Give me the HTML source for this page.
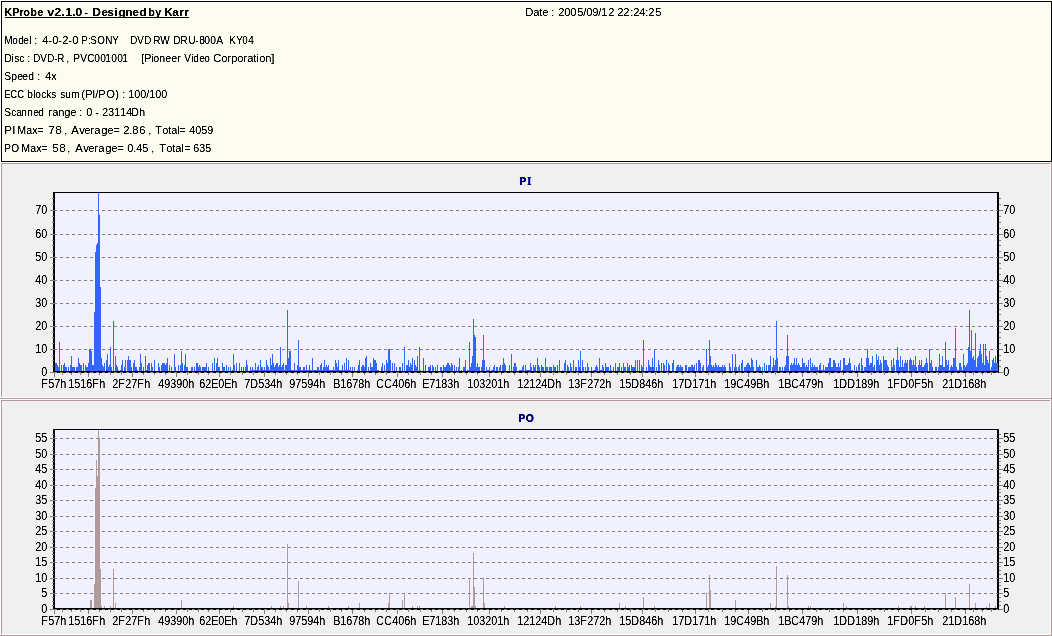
<!DOCTYPE html>
<html><head><meta charset="utf-8"><title>KProbe v2.1.0 - Designed by Karr</title>
<style>
html,body{margin:0;padding:0;background:#fff;}
svg{display:block;}
text{font-family:"Liberation Sans","DejaVu Sans",sans-serif;fill:#000;}
.i{font-size:11px;}
.t{font-size:11px;font-weight:bold;}
.a{font-size:12.5px;}
.h{font-family:"DejaVu Sans","Liberation Sans",sans-serif;font-size:11px;font-weight:bold;fill:#000080;}
.hs{font-family:"DejaVu Serif","Liberation Serif",serif;}
</style></head><body>
<svg width="1052" height="636" viewBox="0 0 1052 636" shape-rendering="crispEdges">
<defs><filter id="cr" x="0" y="0" width="1052" height="636" filterUnits="userSpaceOnUse" color-interpolation-filters="sRGB"><feComponentTransfer><feFuncA type="table" tableValues="0 0.1 0.75 1 1"/></feComponentTransfer></filter></defs>
<rect x="0" y="0" width="1052" height="636" fill="#ffffff"/>
<rect x="1.5" y="1.5" width="1050" height="160" fill="#fcfcf1" stroke="#000" stroke-width="1"/>
<rect x="5" y="17" width="184" height="1" fill="#000"/>
<rect x="1" y="163" width="1051" height="236" fill="#f0f0f0"/>
<rect x="1" y="163" width="1049" height="1" fill="#b09a9a"/>
<rect x="1" y="163" width="1" height="234" fill="#b09a9a"/>
<rect x="2" y="397" width="1049" height="1" fill="#fff"/>
<rect x="1050" y="163" width="1" height="235" fill="#fff"/>
<rect x="0" y="398" width="1052" height="1" fill="#b09a9a"/>
<rect x="1051" y="162" width="1" height="237" fill="#b09a9a"/>
<rect x="55" y="193" width="942" height="178" fill="#f0f0ff"/>
<path d="M54 349.5H997 M54 326.5H997 M54 303.5H997 M54 280.5H997 M54 257.5H997 M54 234.5H997 M54 210.5H997" stroke="#808080" stroke-width="1" stroke-dasharray="3 3" fill="none"/>
<path d="M55 363h2v8h-2zM57 365h1v6h-1zM58 367h1v4h-1zM59 342h1v29h-1zM61 365h1v6h-1zM63 365h1v6h-1zM64 363h1v8h-1zM65 367h2v4h-2zM68 367h1v4h-1zM70 365h1v6h-1zM71 356h1v15h-1zM72 367h3v4h-3zM76 367h2v4h-2zM78 358h1v13h-1zM79 363h1v8h-1zM80 365h2v6h-2zM83 363h1v8h-1zM85 365h1v6h-1zM86 367h2v4h-2zM88 363h1v8h-1zM89 349h2v22h-2zM91 351h1v20h-1zM92 365h2v6h-2zM94 312h1v59h-1zM95 252h1v119h-1zM96 245h1v126h-1zM97 243h1v128h-1zM98 193h1v178h-1zM99 215h1v156h-1zM100 287h1v84h-1zM101 358h1v13h-1zM102 365h1v6h-1zM103 367h1v4h-1zM104 363h1v8h-1zM106 360h1v11h-1zM107 354h1v17h-1zM108 367h1v4h-1zM109 365h1v6h-1zM110 347h1v24h-1zM111 367h1v4h-1zM113 321h1v50h-1zM115 356h1v15h-1zM116 365h1v6h-1zM117 367h1v4h-1zM118 370h1v1h-1zM120 370h1v1h-1zM121 365h1v6h-1zM122 360h1v11h-1zM124 367h1v4h-1zM125 360h1v11h-1zM127 360h1v11h-1zM128 356h1v15h-1zM129 360h2v11h-2zM131 367h1v4h-1zM133 363h1v8h-1zM134 360h1v11h-1zM135 367h2v4h-2zM137 370h1v1h-1zM139 367h1v4h-1zM140 354h1v17h-1zM141 363h1v8h-1zM143 367h1v4h-1zM145 356h1v15h-1zM146 370h1v1h-1zM147 365h1v6h-1zM148 363h2v8h-2zM151 363h1v8h-1zM152 367h1v4h-1zM154 360h1v11h-1zM158 363h1v8h-1zM159 367h1v4h-1zM161 365h1v6h-1zM162 363h3v8h-3zM165 365h1v6h-1zM166 363h1v8h-1zM167 358h1v13h-1zM169 365h1v6h-1zM171 367h1v4h-1zM174 354h1v17h-1zM175 367h1v4h-1zM178 365h1v6h-1zM180 365h1v6h-1zM181 351h1v20h-1zM182 363h1v8h-1zM184 365h1v6h-1zM185 354h1v17h-1zM186 367h2v4h-2zM191 367h2v4h-2zM194 367h1v4h-1zM196 363h2v8h-2zM198 367h1v4h-1zM199 365h1v6h-1zM200 367h1v4h-1zM202 367h4v4h-4zM206 363h1v8h-1zM208 367h1v4h-1zM212 363h1v8h-1zM214 358h1v13h-1zM216 363h1v8h-1zM217 358h1v13h-1zM218 367h2v4h-2zM222 363h1v8h-1zM223 367h2v4h-2zM226 365h1v6h-1zM228 367h1v4h-1zM230 367h1v4h-1zM232 370h1v1h-1zM233 354h1v17h-1zM234 365h1v6h-1zM236 363h1v8h-1zM239 363h1v8h-1zM241 367h1v4h-1zM243 367h1v4h-1zM245 367h1v4h-1zM246 360h1v11h-1zM247 365h1v6h-1zM250 367h1v4h-1zM251 370h1v1h-1zM252 367h1v4h-1zM253 370h2v1h-2zM255 363h1v8h-1zM256 370h1v1h-1zM257 367h1v4h-1zM258 365h1v6h-1zM259 370h1v1h-1zM260 360h1v11h-1zM261 367h2v4h-2zM263 370h1v1h-1zM264 367h1v4h-1zM265 370h1v1h-1zM266 360h1v11h-1zM267 365h1v6h-1zM268 367h1v4h-1zM269 370h1v1h-1zM270 358h1v13h-1zM271 365h1v6h-1zM272 354h1v17h-1zM273 363h1v8h-1zM274 367h1v4h-1zM275 365h1v6h-1zM276 363h2v8h-2zM278 367h1v4h-1zM279 365h1v6h-1zM280 347h1v24h-1zM281 367h1v4h-1zM282 365h1v6h-1zM283 363h1v8h-1zM284 370h1v1h-1zM285 365h2v6h-2zM287 310h1v61h-1zM288 358h1v13h-1zM289 351h2v20h-2zM291 370h3v1h-3zM294 363h1v8h-1zM295 370h2v1h-2zM297 365h1v6h-1zM298 340h1v31h-1zM299 367h2v4h-2zM301 370h2v1h-2zM303 367h2v4h-2zM305 370h1v1h-1zM306 365h1v6h-1zM307 370h2v1h-2zM309 365h1v6h-1zM310 370h2v1h-2zM312 358h1v13h-1zM313 370h4v1h-4zM317 367h2v4h-2zM319 370h1v1h-1zM320 365h1v6h-1zM321 363h1v8h-1zM322 370h1v1h-1zM323 367h1v4h-1zM324 360h1v11h-1zM325 367h1v4h-1zM326 365h1v6h-1zM327 367h1v4h-1zM328 365h1v6h-1zM329 370h4v1h-4zM333 367h1v4h-1zM334 370h1v1h-1zM335 360h1v11h-1zM336 363h1v8h-1zM337 367h1v4h-1zM338 360h1v11h-1zM339 370h3v1h-3zM342 365h1v6h-1zM343 370h1v1h-1zM344 363h1v8h-1zM345 370h1v1h-1zM346 358h1v13h-1zM347 370h1v1h-1zM348 360h1v11h-1zM349 370h1v1h-1zM350 367h1v4h-1zM352 367h1v4h-1zM354 367h1v4h-1zM357 370h1v1h-1zM358 365h1v6h-1zM359 360h1v11h-1zM361 367h1v4h-1zM362 365h2v6h-2zM364 367h1v4h-1zM365 358h1v13h-1zM366 356h1v15h-1zM368 367h1v4h-1zM370 363h1v8h-1zM371 367h2v4h-2zM373 358h1v13h-1zM374 360h2v11h-2zM376 363h1v8h-1zM377 370h2v1h-2zM381 367h1v4h-1zM382 363h1v8h-1zM384 365h1v6h-1zM386 360h1v11h-1zM387 363h1v8h-1zM388 349h2v22h-2zM390 360h1v11h-1zM392 363h1v8h-1zM394 363h1v8h-1zM396 367h1v4h-1zM399 367h2v4h-2zM402 363h1v8h-1zM404 347h1v24h-1zM406 365h2v6h-2zM408 360h1v11h-1zM409 367h1v4h-1zM410 363h1v8h-1zM411 365h1v6h-1zM412 358h1v13h-1zM414 360h1v11h-1zM415 365h1v6h-1zM416 367h1v4h-1zM417 356h1v15h-1zM419 347h1v24h-1zM420 370h1v1h-1zM423 358h1v13h-1zM425 365h1v6h-1zM428 367h2v4h-2zM430 365h1v6h-1zM432 365h1v6h-1zM433 367h1v4h-1zM435 367h1v4h-1zM437 365h1v6h-1zM440 367h2v4h-2zM443 365h1v6h-1zM444 367h2v4h-2zM446 365h1v6h-1zM447 363h2v8h-2zM449 365h1v6h-1zM450 367h1v4h-1zM451 363h1v8h-1zM452 365h1v6h-1zM454 365h1v6h-1zM456 367h1v4h-1zM458 367h1v4h-1zM459 358h1v13h-1zM461 370h1v1h-1zM463 367h2v4h-2zM465 360h1v11h-1zM467 370h2v1h-2zM469 342h1v29h-1zM470 367h1v4h-1zM471 363h1v8h-1zM472 356h1v15h-1zM473 319h1v52h-1zM474 335h1v36h-1zM475 337h1v34h-1zM476 367h1v4h-1zM477 363h1v8h-1zM478 367h2v4h-2zM481 367h1v4h-1zM482 360h1v11h-1zM483 335h1v36h-1zM484 360h1v11h-1zM486 367h1v4h-1zM487 370h2v1h-2zM489 367h1v4h-1zM491 370h2v1h-2zM493 367h1v4h-1zM494 365h1v6h-1zM496 367h2v4h-2zM499 367h1v4h-1zM500 365h1v6h-1zM502 365h1v6h-1zM503 358h1v13h-1zM504 363h1v8h-1zM505 365h1v6h-1zM509 365h1v6h-1zM511 354h1v17h-1zM513 367h1v4h-1zM514 363h2v8h-2zM516 367h1v4h-1zM519 370h3v1h-3zM522 367h1v4h-1zM523 365h1v6h-1zM525 365h1v6h-1zM526 370h4v1h-4zM530 363h1v8h-1zM531 367h1v4h-1zM533 365h1v6h-1zM534 367h1v4h-1zM535 365h1v6h-1zM537 358h1v13h-1zM538 365h1v6h-1zM539 367h1v4h-1zM541 365h1v6h-1zM542 367h2v4h-2zM545 358h1v13h-1zM546 367h2v4h-2zM549 367h3v4h-3zM553 365h1v6h-1zM554 367h2v4h-2zM557 365h1v6h-1zM559 360h1v11h-1zM562 370h1v1h-1zM564 363h1v8h-1zM565 360h1v11h-1zM567 365h1v6h-1zM568 367h1v4h-1zM570 363h1v8h-1zM571 367h1v4h-1zM573 360h1v11h-1zM575 367h2v4h-2zM578 360h1v11h-1zM579 367h1v4h-1zM580 351h1v20h-1zM582 360h1v11h-1zM583 367h1v4h-1zM585 367h1v4h-1zM587 363h1v8h-1zM588 367h1v4h-1zM591 367h1v4h-1zM593 370h2v1h-2zM595 367h1v4h-1zM596 365h1v6h-1zM597 367h1v4h-1zM599 358h1v13h-1zM600 370h2v1h-2zM602 365h1v6h-1zM603 367h1v4h-1zM605 363h1v8h-1zM606 367h3v4h-3zM610 365h1v6h-1zM611 370h1v1h-1zM613 367h1v4h-1zM615 363h1v8h-1zM617 367h2v4h-2zM619 363h1v8h-1zM621 367h1v4h-1zM623 363h1v8h-1zM624 367h2v4h-2zM627 363h1v8h-1zM628 367h1v4h-1zM629 365h1v6h-1zM631 365h1v6h-1zM632 367h3v4h-3zM635 360h1v11h-1zM637 360h1v11h-1zM639 360h1v11h-1zM641 365h1v6h-1zM642 367h1v4h-1zM643 340h1v31h-1zM646 367h1v4h-1zM648 360h1v11h-1zM649 365h1v6h-1zM650 367h2v4h-2zM652 358h1v13h-1zM653 367h1v4h-1zM654 349h1v22h-1zM656 367h1v4h-1zM658 360h1v11h-1zM659 365h1v6h-1zM661 363h1v8h-1zM663 363h1v8h-1zM664 365h1v6h-1zM666 360h1v11h-1zM668 363h1v8h-1zM669 365h1v6h-1zM672 363h1v8h-1zM673 360h1v11h-1zM676 367h1v4h-1zM677 365h2v6h-2zM679 367h1v4h-1zM680 365h1v6h-1zM681 367h2v4h-2zM685 365h2v6h-2zM688 367h3v4h-3zM691 365h2v6h-2zM693 367h1v4h-1zM694 365h1v6h-1zM696 363h1v8h-1zM698 360h2v11h-2zM700 363h1v8h-1zM702 367h1v4h-1zM703 365h1v6h-1zM706 349h1v22h-1zM707 367h1v4h-1zM708 365h1v6h-1zM709 340h1v31h-1zM710 356h1v15h-1zM711 365h1v6h-1zM712 367h1v4h-1zM713 365h1v6h-1zM714 367h1v4h-1zM715 363h1v8h-1zM716 365h1v6h-1zM717 367h1v4h-1zM718 365h1v6h-1zM719 367h3v4h-3zM722 365h1v6h-1zM723 367h1v4h-1zM724 365h1v6h-1zM725 367h1v4h-1zM729 363h1v8h-1zM730 367h1v4h-1zM732 354h1v17h-1zM734 367h1v4h-1zM735 354h1v17h-1zM736 367h1v4h-1zM738 367h1v4h-1zM739 365h1v6h-1zM741 363h1v8h-1zM742 360h1v11h-1zM744 367h2v4h-2zM746 365h1v6h-1zM747 363h2v8h-2zM749 365h1v6h-1zM750 367h1v4h-1zM751 358h1v13h-1zM752 360h1v11h-1zM753 367h1v4h-1zM756 360h1v11h-1zM757 367h2v4h-2zM759 365h1v6h-1zM760 367h1v4h-1zM762 367h1v4h-1zM764 363h1v8h-1zM766 365h1v6h-1zM768 365h2v6h-2zM770 356h1v15h-1zM772 367h1v4h-1zM773 358h1v13h-1zM774 365h1v6h-1zM775 360h1v11h-1zM776 321h1v50h-1zM777 358h1v13h-1zM779 367h2v4h-2zM782 367h1v4h-1zM784 367h1v4h-1zM785 365h1v6h-1zM786 356h1v15h-1zM787 335h1v36h-1zM788 356h1v15h-1zM790 365h1v6h-1zM791 363h1v8h-1zM792 365h1v6h-1zM793 363h1v8h-1zM794 358h1v13h-1zM795 365h1v6h-1zM796 358h1v13h-1zM797 365h1v6h-1zM798 363h1v8h-1zM799 365h1v6h-1zM800 367h2v4h-2zM802 358h1v13h-1zM803 363h2v8h-2zM805 367h1v4h-1zM806 365h1v6h-1zM807 367h1v4h-1zM808 360h1v11h-1zM810 358h1v13h-1zM811 367h1v4h-1zM812 363h1v8h-1zM813 367h1v4h-1zM814 365h1v6h-1zM815 367h3v4h-3zM818 370h1v1h-1zM819 365h1v6h-1zM820 363h1v8h-1zM821 370h2v1h-2zM823 365h1v6h-1zM824 370h1v1h-1zM825 367h3v4h-3zM828 363h1v8h-1zM829 358h2v13h-2zM831 367h2v4h-2zM833 360h2v11h-2zM835 363h1v8h-1zM836 367h2v4h-2zM838 363h1v8h-1zM839 367h1v4h-1zM840 360h1v11h-1zM842 370h1v1h-1zM843 358h2v13h-2zM845 365h3v6h-3zM848 363h1v8h-1zM849 358h1v13h-1zM850 363h1v8h-1zM851 370h2v1h-2zM854 365h1v6h-1zM856 367h1v4h-1zM858 365h1v6h-1zM859 363h1v8h-1zM861 358h1v13h-1zM862 365h1v6h-1zM864 367h2v4h-2zM866 358h1v13h-1zM867 349h1v22h-1zM868 358h1v13h-1zM869 365h1v6h-1zM870 363h2v8h-2zM872 356h1v15h-1zM873 367h1v4h-1zM874 365h1v6h-1zM876 354h1v17h-1zM877 360h1v11h-1zM878 356h1v15h-1zM879 365h1v6h-1zM880 360h1v11h-1zM881 363h1v8h-1zM883 356h1v15h-1zM884 360h3v11h-3zM887 365h1v6h-1zM888 367h1v4h-1zM891 360h1v11h-1zM892 367h1v4h-1zM893 358h1v13h-1zM894 365h1v6h-1zM896 360h1v11h-1zM897 347h1v24h-1zM898 360h1v11h-1zM899 367h1v4h-1zM900 356h1v15h-1zM901 367h1v4h-1zM902 360h1v11h-1zM903 367h1v4h-1zM904 363h1v8h-1zM905 360h1v11h-1zM906 363h1v8h-1zM907 360h1v11h-1zM909 360h1v11h-1zM910 358h1v13h-1zM911 360h1v11h-1zM912 365h1v6h-1zM913 360h1v11h-1zM914 365h1v6h-1zM915 356h1v15h-1zM916 367h1v4h-1zM918 365h1v6h-1zM919 360h1v11h-1zM920 365h1v6h-1zM921 360h1v11h-1zM922 367h2v4h-2zM924 365h1v6h-1zM925 363h1v8h-1zM926 358h1v13h-1zM927 363h1v8h-1zM929 349h1v22h-1zM930 363h1v8h-1zM931 360h1v11h-1zM932 367h1v4h-1zM935 367h2v4h-2zM938 367h1v4h-1zM939 354h1v17h-1zM940 365h2v6h-2zM942 356h1v15h-1zM943 367h2v4h-2zM945 342h1v29h-1zM946 360h1v11h-1zM947 365h1v6h-1zM948 360h1v11h-1zM949 370h1v1h-1zM950 367h1v4h-1zM951 365h1v6h-1zM952 367h1v4h-1zM953 358h2v13h-2zM955 328h1v43h-1zM956 367h1v4h-1zM957 370h2v1h-2zM959 363h2v8h-2zM961 367h1v4h-1zM962 370h1v1h-1zM963 354h1v17h-1zM964 365h1v6h-1zM965 367h1v4h-1zM966 365h1v6h-1zM967 363h1v8h-1zM968 347h1v24h-1zM969 310h1v61h-1zM970 351h1v20h-1zM971 330h1v41h-1zM972 358h1v13h-1zM973 356h1v15h-1zM974 360h1v11h-1zM975 333h1v38h-1zM976 367h1v4h-1zM977 358h1v13h-1zM978 356h1v15h-1zM979 351h1v20h-1zM980 344h1v27h-1zM981 354h1v17h-1zM982 363h1v8h-1zM983 344h1v27h-1zM984 365h1v6h-1zM985 344h1v27h-1zM986 356h1v15h-1zM987 360h1v11h-1zM988 363h1v8h-1zM989 351h1v20h-1zM990 370h1v1h-1zM991 367h1v4h-1zM992 360h1v11h-1zM993 358h1v13h-1zM994 363h1v8h-1zM995 356h1v15h-1zM996 363h1v8h-1z" fill="#3366ff"/>
<rect x="53" y="192" width="946" height="1" fill="#000"/>
<rect x="53" y="192" width="2" height="181" fill="#000"/>
<rect x="997" y="192" width="2" height="181" fill="#000"/>
<rect x="53" y="371" width="946" height="2" fill="#000"/>
<rect x="997" y="363" width="1" height="8" fill="#3366ff"/>
<path d="M54 372.5H997" stroke="#808080" stroke-width="1" stroke-dasharray="3 3" fill="none"/>
<path d="M50 372.5h5M997 372.5h1M999 372.5h4M50 349.5h5M997 349.5h1M999 349.5h4M50 326.5h5M997 326.5h1M999 326.5h4M50 303.5h5M997 303.5h1M999 303.5h4M50 280.5h5M997 280.5h1M999 280.5h4M50 257.5h5M997 257.5h1M999 257.5h4M50 234.5h5M997 234.5h1M999 234.5h4M50 210.5h5M997 210.5h1M999 210.5h4M52 366.5h2M999 366.5h2M52 360.5h2M999 360.5h2M52 355.5h2M999 355.5h2M52 343.5h2M999 343.5h2M52 337.5h2M999 337.5h2M52 332.5h2M999 332.5h2M52 320.5h2M999 320.5h2M52 314.5h2M999 314.5h2M52 309.5h2M999 309.5h2M52 297.5h2M999 297.5h2M52 291.5h2M999 291.5h2M52 286.5h2M999 286.5h2M52 274.5h2M999 274.5h2M52 268.5h2M999 268.5h2M52 263.5h2M999 263.5h2M52 251.5h2M999 251.5h2M52 245.5h2M999 245.5h2M52 240.5h2M999 240.5h2M52 228.5h2M999 228.5h2M52 222.5h2M999 222.5h2M52 216.5h2M999 216.5h2M52 204.5h2M999 204.5h2M52 198.5h2M999 198.5h2M54.5 373v4M88.5 373v4M132.5 373v4M176.5 373v4M219.5 373v4M264.5 373v4M308.5 373v4M352.5 373v4M397.5 373v4M442.5 373v4M489.5 373v4M540.5 373v4M591.5 373v4M642.5 373v4M695.5 373v4M748.5 373v4M802.5 373v4M857.5 373v4M911.5 373v4M965.5 373v4M62.5 373v2M71.5 373v2M80.5 373v2M99.5 373v2M110.5 373v2M121.5 373v2M143.5 373v2M154.5 373v2M165.5 373v2M187.5 373v2M198.5 373v2M208.5 373v2M230.5 373v2M242.5 373v2M253.5 373v2M275.5 373v2M286.5 373v2M297.5 373v2M319.5 373v2M330.5 373v2M341.5 373v2M364.5 373v2M375.5 373v2M386.5 373v2M408.5 373v2M420.5 373v2M431.5 373v2M454.5 373v2M466.5 373v2M477.5 373v2M501.5 373v2M514.5 373v2M527.5 373v2M553.5 373v2M566.5 373v2M578.5 373v2M604.5 373v2M617.5 373v2M630.5 373v2M655.5 373v2M668.5 373v2M682.5 373v2M708.5 373v2M722.5 373v2M735.5 373v2M762.5 373v2M775.5 373v2M789.5 373v2M816.5 373v2M829.5 373v2M843.5 373v2M871.5 373v2M884.5 373v2M898.5 373v2M925.5 373v2M938.5 373v2M951.5 373v2M973.5 373v2M982.5 373v2M991.5 373v2" stroke="#808080" stroke-width="1" fill="none"/>
<rect x="1" y="400" width="1051" height="236" fill="#f0f0f0"/>
<rect x="1" y="400" width="1049" height="1" fill="#b09a9a"/>
<rect x="1" y="400" width="1" height="234" fill="#b09a9a"/>
<rect x="2" y="634" width="1049" height="1" fill="#fff"/>
<rect x="1050" y="400" width="1" height="235" fill="#fff"/>
<rect x="0" y="635" width="1052" height="1" fill="#b09a9a"/>
<rect x="1051" y="399" width="1" height="237" fill="#b09a9a"/>
<rect x="55" y="430" width="942" height="178" fill="#f0f0ff"/>
<path d="M54 593.5H997 M54 578.5H997 M54 562.5H997 M54 547.5H997 M54 531.5H997 M54 516.5H997 M54 500.5H997 M54 485.5H997 M54 469.5H997 M54 454.5H997 M54 438.5H997" stroke="#808080" stroke-width="1" stroke-dasharray="3 3" fill="none"/>
<path d="M90 600h2v8h-2zM94 584h1v24h-1zM95 488h1v120h-1zM96 460h1v148h-1zM97 476h1v132h-1zM98 430h1v178h-1zM99 438h1v170h-1zM100 569h1v39h-1zM101 606h1v2h-1zM104 606h1v2h-1zM110 606h1v2h-1zM113 569h1v39h-1zM115 603h1v5h-1zM181 600h1v8h-1zM233 606h1v2h-1zM271 606h1v2h-1zM280 606h1v2h-1zM283 606h1v2h-1zM287 544h1v64h-1zM288 603h1v5h-1zM298 581h1v27h-1zM306 606h1v2h-1zM328 606h1v2h-1zM348 606h1v2h-1zM359 603h1v5h-1zM388 603h1v5h-1zM389 593h1v15h-1zM402 600h1v8h-1zM404 593h1v15h-1zM412 606h1v2h-1zM417 606h1v2h-1zM419 606h1v2h-1zM469 578h1v30h-1zM471 606h2v2h-2zM473 553h1v55h-1zM474 587h1v21h-1zM475 606h1v2h-1zM483 578h1v30h-1zM484 603h1v5h-1zM504 606h1v2h-1zM555 606h1v2h-1zM580 606h1v2h-1zM619 603h1v5h-1zM625 606h1v2h-1zM643 597h1v11h-1zM654 606h1v2h-1zM706 593h1v15h-1zM709 575h1v33h-1zM710 590h1v18h-1zM735 600h1v8h-1zM770 603h1v5h-1zM775 606h1v2h-1zM776 566h1v42h-1zM787 575h1v33h-1zM788 606h1v2h-1zM808 606h1v2h-1zM810 606h1v2h-1zM843 603h1v5h-1zM846 606h1v2h-1zM898 606h1v2h-1zM910 606h2v2h-2zM915 606h1v2h-1zM924 606h1v2h-1zM945 593h1v15h-1zM955 597h1v11h-1zM969 584h1v24h-1zM975 603h1v5h-1zM986 606h1v2h-1zM989 603h1v5h-1zM995 606h1v2h-1z" fill="#b09a9a"/>
<rect x="53" y="429" width="946" height="1" fill="#000"/>
<rect x="53" y="429" width="2" height="181" fill="#000"/>
<rect x="997" y="429" width="2" height="181" fill="#000"/>
<rect x="53" y="608" width="946" height="2" fill="#000"/>
<path d="M54 609.5H997" stroke="#808080" stroke-width="1" stroke-dasharray="3 3" fill="none"/>
<path d="M50 609.5h5M997 609.5h1M999 609.5h4M50 593.5h5M997 593.5h1M999 593.5h4M50 578.5h5M997 578.5h1M999 578.5h4M50 562.5h5M997 562.5h1M999 562.5h4M50 547.5h5M997 547.5h1M999 547.5h4M50 531.5h5M997 531.5h1M999 531.5h4M50 516.5h5M997 516.5h1M999 516.5h4M50 500.5h5M997 500.5h1M999 500.5h4M50 485.5h5M997 485.5h1M999 485.5h4M50 469.5h5M997 469.5h1M999 469.5h4M50 454.5h5M997 454.5h1M999 454.5h4M50 438.5h5M997 438.5h1M999 438.5h4M52 605.5h2M999 605.5h2M52 601.5h2M999 601.5h2M52 597.5h2M999 597.5h2M52 589.5h2M999 589.5h2M52 585.5h2M999 585.5h2M52 582.5h2M999 582.5h2M52 574.5h2M999 574.5h2M52 570.5h2M999 570.5h2M52 566.5h2M999 566.5h2M52 558.5h2M999 558.5h2M52 554.5h2M999 554.5h2M52 551.5h2M999 551.5h2M52 543.5h2M999 543.5h2M52 539.5h2M999 539.5h2M52 535.5h2M999 535.5h2M52 527.5h2M999 527.5h2M52 523.5h2M999 523.5h2M52 520.5h2M999 520.5h2M52 512.5h2M999 512.5h2M52 508.5h2M999 508.5h2M52 504.5h2M999 504.5h2M52 496.5h2M999 496.5h2M52 492.5h2M999 492.5h2M52 489.5h2M999 489.5h2M52 481.5h2M999 481.5h2M52 477.5h2M999 477.5h2M52 473.5h2M999 473.5h2M52 465.5h2M999 465.5h2M52 461.5h2M999 461.5h2M52 458.5h2M999 458.5h2M52 450.5h2M999 450.5h2M52 446.5h2M999 446.5h2M52 442.5h2M999 442.5h2M52 434.5h2M999 434.5h2M54.5 610v4M88.5 610v4M132.5 610v4M176.5 610v4M219.5 610v4M264.5 610v4M308.5 610v4M352.5 610v4M397.5 610v4M442.5 610v4M489.5 610v4M540.5 610v4M591.5 610v4M642.5 610v4M695.5 610v4M748.5 610v4M802.5 610v4M857.5 610v4M911.5 610v4M965.5 610v4M62.5 610v2M71.5 610v2M80.5 610v2M99.5 610v2M110.5 610v2M121.5 610v2M143.5 610v2M154.5 610v2M165.5 610v2M187.5 610v2M198.5 610v2M208.5 610v2M230.5 610v2M242.5 610v2M253.5 610v2M275.5 610v2M286.5 610v2M297.5 610v2M319.5 610v2M330.5 610v2M341.5 610v2M364.5 610v2M375.5 610v2M386.5 610v2M408.5 610v2M420.5 610v2M431.5 610v2M454.5 610v2M466.5 610v2M477.5 610v2M501.5 610v2M514.5 610v2M527.5 610v2M553.5 610v2M566.5 610v2M578.5 610v2M604.5 610v2M617.5 610v2M630.5 610v2M655.5 610v2M668.5 610v2M682.5 610v2M708.5 610v2M722.5 610v2M735.5 610v2M762.5 610v2M775.5 610v2M789.5 610v2M816.5 610v2M829.5 610v2M843.5 610v2M871.5 610v2M884.5 610v2M898.5 610v2M925.5 610v2M938.5 610v2M951.5 610v2M973.5 610v2M982.5 610v2M991.5 610v2" stroke="#808080" stroke-width="1" fill="none"/>
<g filter="url(#cr)">
<text class="t" transform="translate(0,16) scale(0.9946,1)" x="4.27 12.32 19.35 23.38 30.41 37.45">KProbe</text>
<text class="t" transform="translate(0,16) scale(1.1466,1)" x="41.21 47.31 53.42 56.91 63.01 65.63">v2.1.0</text>
<text class="t" transform="translate(0,16) scale(1.0000,1)" x="84.25">-</text>
<text class="t" transform="translate(0,16) scale(1.0989,1)" x="83.95 92.14 97.60 103.97 107.61 113.98 120.35 126.72">Designed</text>
<text class="t" transform="translate(0,16) scale(0.9873,1)" x="150.15 157.24">by</text>
<text class="t" transform="translate(0,16) scale(1.0681,1)" x="153.78 161.27 167.82 172.50">Karr</text>
<text class="i" transform="translate(0,44) scale(0.9110,1)" x="4.67 13.45 20.03 25.52 32.11">Model</text>
<text class="i" transform="translate(0,44) scale(1.0000,1)" x="34.25">:</text>
<text class="i" transform="translate(0,44) scale(1.0121,1)" x="41.74 47.67 51.62 57.55 61.50 67.43 71.38">4-0-2-0</text>
<text class="i" transform="translate(0,44) scale(0.8955,1)" x="90.73 98.54 100.78 108.59 117.53 125.34">P:SONY</text>
<text class="i" transform="translate(0,44) scale(0.8901,1)" x="146.34 154.20 162.06">DVD</text>
<text class="i" transform="translate(0,44) scale(0.9088,1)" x="168.64 176.34">RW</text>
<text class="i" transform="translate(0,44) scale(0.9338,1)" x="185.54 193.03 201.60 209.10 213.38 218.73 225.16 231.59">DRU-800A</text>
<text class="i" transform="translate(0,44) scale(0.8994,1)" x="254.90 262.68 269.35 276.03">KY04</text>
<text class="i" transform="translate(0,62) scale(0.9408,1)" x="4.52 11.96 15.15 20.46">Disc</text>
<text class="i" transform="translate(0,62) scale(1.0000,1)" x="27.25">:</text>
<text class="i" transform="translate(0,62) scale(0.8947,1)" x="37.16 44.99 52.81 60.63 63.99">DVD-R</text>
<text class="i" transform="translate(0,62) scale(1.0000,1)" x="66.25">,</text>
<text class="i" transform="translate(0,62) scale(0.9243,1)" x="79.25 86.83 94.40 101.97 108.47 113.88 120.37 126.86 132.27">PVC001001</text>
<text class="i" transform="translate(0,62) scale(0.9649,1)" x="146.39 149.50 156.75 158.82 165.04 171.26 177.48 183.70">[Pioneer</text>
<text class="i" transform="translate(0,62) scale(0.9159,1)" x="201.17 208.81 211.00 217.55 223.01">Video</text>
<text class="i" transform="translate(0,62) scale(1.0137,1)" x="210.37 218.26 224.18 228.13 234.04 239.96 243.91 249.83 252.79 255.75 261.67 267.59">Corporation]</text>
<text class="i" transform="translate(0,80) scale(0.9445,1)" x="4.50 11.91 18.26 23.56 29.91">Speed</text>
<text class="i" transform="translate(0,80) scale(1.0000,1)" x="37.25">:</text>
<text class="i" transform="translate(0,80) scale(0.9780,1)" x="46.27 52.40">4x</text>
<text class="i" transform="translate(0,98) scale(0.8583,1)" x="4.95 11.94 20.10">ECC</text>
<text class="i" transform="translate(0,98) scale(0.9244,1)" x="29.48 35.97 38.13 44.62 50.03 55.44">blocks</text>
<text class="i" transform="translate(0,98) scale(0.9215,1)" x="65.38 70.81 77.32">sum</text>
<text class="i" transform="translate(0,98) scale(1.0197,1)" x="79.68 83.60 90.47 93.41 96.35 104.20 113.02">(PI/PO)</text>
<text class="i" transform="translate(0,98) scale(1.0000,1)" x="122.25">:</text>
<text class="i" transform="translate(0,98) scale(0.9794,1)" x="130.95 137.08 143.21 149.33 152.40 158.52 164.65">100/100</text>
<text class="i" transform="translate(0,116) scale(0.9167,1)" x="4.64 12.27 17.73 23.18 29.73 36.27 41.73">Scanned</text>
<text class="i" transform="translate(0,116) scale(1.0106,1)" x="47.74 51.70 57.64 63.58 69.51">range</text>
<text class="i" transform="translate(0,116) scale(1.0000,1)" x="79.25">:</text>
<text class="i" transform="translate(0,116) scale(1.0000,1)" x="86.25">0</text>
<text class="i" transform="translate(0,116) scale(1.0000,1)" x="95.25">-</text>
<text class="i" transform="translate(0,116) scale(0.9612,1)" x="106.38 112.62 118.86 125.10 131.34 136.55 144.87">23114Dh</text>
<text class="i" transform="translate(0,134) scale(1.0619,1)" x="4.00 11.54">PI</text>
<text class="i" transform="translate(0,134) scale(0.9744,1)" x="17.70 26.94 33.10 38.23">Max=</text>
<text class="i" transform="translate(0,134) scale(1.0899,1)" x="44.27 50.69">78</text>
<text class="i" transform="translate(0,134) scale(1.0000,1)" x="64.25">,</text>
<text class="i" transform="translate(0,134) scale(1.0271,1)" x="69.37 77.16 82.03 87.87 91.76 98.58 104.42 110.26">Average=</text>
<text class="i" transform="translate(0,134) scale(1.0308,1)" x="119.57 125.39 128.30 135.09">2.86</text>
<text class="i" transform="translate(0,134) scale(1.0000,1)" x="148.25">,</text>
<text class="i" transform="translate(0,134) scale(0.9937,1)" x="156.23 163.27 169.31 172.33 178.37 180.38">Total=</text>
<text class="i" transform="translate(0,134) scale(0.9832,1)" x="192.48 198.58 204.68 210.78">4059</text>
<text class="i" transform="translate(0,152) scale(0.9126,1)" x="4.66 12.33">PO</text>
<text class="i" transform="translate(0,152) scale(0.9744,1)" x="21.81 31.05 37.20 42.33">Max=</text>
<text class="i" transform="translate(0,152) scale(1.0692,1)" x="48.87 55.42">58</text>
<text class="i" transform="translate(0,152) scale(1.0000,1)" x="67.25">,</text>
<text class="i" transform="translate(0,152) scale(1.0271,1)" x="73.26 81.05 85.92 91.76 95.66 102.47 108.31 114.16">Average=</text>
<text class="i" transform="translate(0,152) scale(0.9991,1)" x="127.36 133.36 136.37 142.37">0.45</text>
<text class="i" transform="translate(0,152) scale(1.0000,1)" x="151.25">,</text>
<text class="i" transform="translate(0,152) scale(1.0070,1)" x="158.14 165.09 171.05 174.03 179.99 182.97">Total=</text>
<text class="i" transform="translate(0,152) scale(0.9693,1)" x="199.38 205.57 211.76">635</text>
<text class="i" transform="translate(0,16) scale(1.0209,1)" x="514.52 522.35 528.23 531.17">Date</text>
<text class="i" transform="translate(0,16) scale(1.0000,1)" x="551.25">:</text>
<text class="i" transform="translate(0,16) scale(1.0140,1)" x="550.57 556.49 562.40 569.31 575.22 578.18 584.10 590.02 592.98 599.88">2005/09/12</text>
<text class="i" transform="translate(0,16) scale(1.0286,1)" x="600.07 605.90 612.71 615.63 621.46 627.29 630.21 637.01">22:24:25</text>
<text class="a" transform="translate(0,376) scale(0.8631,1)" x="47.79">0</text>
<text class="a" transform="translate(0,376) scale(0.8631,1)" x="1162.42">0</text>
<text class="a" transform="translate(0,353) scale(0.8631,1)" x="40.84 47.79">10</text>
<text class="a" transform="translate(0,353) scale(0.8631,1)" x="1162.42 1169.37">10</text>
<text class="a" transform="translate(0,330) scale(0.8631,1)" x="40.84 47.79">20</text>
<text class="a" transform="translate(0,330) scale(0.8631,1)" x="1162.42 1169.37">20</text>
<text class="a" transform="translate(0,307) scale(0.8631,1)" x="40.84 47.79">30</text>
<text class="a" transform="translate(0,307) scale(0.8631,1)" x="1162.42 1169.37">30</text>
<text class="a" transform="translate(0,284) scale(0.8631,1)" x="40.84 47.79">40</text>
<text class="a" transform="translate(0,284) scale(0.8631,1)" x="1162.42 1169.37">40</text>
<text class="a" transform="translate(0,261) scale(0.8631,1)" x="40.84 47.79">50</text>
<text class="a" transform="translate(0,261) scale(0.8631,1)" x="1162.42 1169.37">50</text>
<text class="a" transform="translate(0,238) scale(0.8631,1)" x="40.84 47.79">60</text>
<text class="a" transform="translate(0,238) scale(0.8631,1)" x="1162.42 1169.37">60</text>
<text class="a" transform="translate(0,214) scale(0.8631,1)" x="40.84 47.79">70</text>
<text class="a" transform="translate(0,214) scale(0.8631,1)" x="1162.42 1169.37">70</text>
<text class="a" transform="translate(0,388) scale(0.8631,1)" x="47.79 55.90 62.86 69.81">F57h</text>
<text class="a" transform="translate(0,388) scale(0.8631,1)" x="79.08 86.03 92.98 99.93 106.89 115.00">1516Fh</text>
<text class="a" transform="translate(0,388) scale(0.8631,1)" x="130.06 137.01 145.12 152.07 159.02 167.14">2F27Fh</text>
<text class="a" transform="translate(0,388) scale(0.8631,1)" x="183.36 190.31 197.26 204.21 211.16 218.12">49390h</text>
<text class="a" transform="translate(0,388) scale(0.8631,1)" x="230.86 237.81 244.76 252.88 259.83 267.94">62E0Eh</text>
<text class="a" transform="translate(0,388) scale(0.8631,1)" x="283.00 289.95 299.22 306.17 313.13 320.08">7D534h</text>
<text class="a" transform="translate(0,388) scale(0.8631,1)" x="335.14 342.09 349.04 356.00 362.95 369.90">97594h</text>
<text class="a" transform="translate(0,388) scale(0.8631,1)" x="386.12 394.23 401.18 408.13 415.09 422.04">B1678h</text>
<text class="a" transform="translate(0,388) scale(0.8631,1)" x="435.94 445.21 454.48 461.43 468.38 475.34">CC406h</text>
<text class="a" transform="translate(0,388) scale(0.8631,1)" x="489.24 497.35 504.30 511.25 518.21 525.16">E7183h</text>
<text class="a" transform="translate(0,388) scale(0.8631,1)" x="541.38 548.33 555.28 562.24 569.19 576.14 583.09">103201h</text>
<text class="a" transform="translate(0,388) scale(0.8631,1)" x="599.31 606.26 613.22 620.17 627.12 634.07 643.34">12124Dh</text>
<text class="a" transform="translate(0,388) scale(0.8631,1)" x="658.40 665.36 672.31 680.42 687.37 694.32 701.27">13F272h</text>
<text class="a" transform="translate(0,388) scale(0.8631,1)" x="717.49 724.45 731.40 740.67 747.62 754.57 761.52">15D846h</text>
<text class="a" transform="translate(0,388) scale(0.8631,1)" x="778.90 785.85 792.81 802.08 809.03 815.98 822.93">17D171h</text>
<text class="a" transform="translate(0,388) scale(0.8631,1)" x="839.15 846.10 853.06 862.33 869.28 876.23 884.34">19C49Bh</text>
<text class="a" transform="translate(0,388) scale(0.8631,1)" x="901.72 908.67 916.78 926.05 933.00 939.96 946.91">1BC479h</text>
<text class="a" transform="translate(0,388) scale(0.8631,1)" x="965.45 972.40 981.67 990.94 997.89 1004.84 1011.79">1DD189h</text>
<text class="a" transform="translate(0,388) scale(0.8631,1)" x="1028.01 1034.96 1043.08 1052.34 1059.30 1067.41 1074.36">1FD0F5h</text>
<text class="a" transform="translate(0,388) scale(0.8631,1)" x="1091.74 1098.69 1105.64 1114.91 1121.86 1128.82 1135.77">21D168h</text>
<text class="h" transform="translate(0,185) scale(0.92,1)" x="564.24 572.93">P<tspan class="hs">I</tspan></text>
<text class="a" transform="translate(0,613) scale(0.8631,1)" x="47.79">0</text>
<text class="a" transform="translate(0,613) scale(0.8631,1)" x="1162.42">0</text>
<text class="a" transform="translate(0,597) scale(0.8631,1)" x="47.79">5</text>
<text class="a" transform="translate(0,597) scale(0.8631,1)" x="1162.42">5</text>
<text class="a" transform="translate(0,582) scale(0.8631,1)" x="40.84 47.79">10</text>
<text class="a" transform="translate(0,582) scale(0.8631,1)" x="1162.42 1169.37">10</text>
<text class="a" transform="translate(0,566) scale(0.8631,1)" x="40.84 47.79">15</text>
<text class="a" transform="translate(0,566) scale(0.8631,1)" x="1162.42 1169.37">15</text>
<text class="a" transform="translate(0,551) scale(0.8631,1)" x="40.84 47.79">20</text>
<text class="a" transform="translate(0,551) scale(0.8631,1)" x="1162.42 1169.37">20</text>
<text class="a" transform="translate(0,535) scale(0.8631,1)" x="40.84 47.79">25</text>
<text class="a" transform="translate(0,535) scale(0.8631,1)" x="1162.42 1169.37">25</text>
<text class="a" transform="translate(0,520) scale(0.8631,1)" x="40.84 47.79">30</text>
<text class="a" transform="translate(0,520) scale(0.8631,1)" x="1162.42 1169.37">30</text>
<text class="a" transform="translate(0,504) scale(0.8631,1)" x="40.84 47.79">35</text>
<text class="a" transform="translate(0,504) scale(0.8631,1)" x="1162.42 1169.37">35</text>
<text class="a" transform="translate(0,489) scale(0.8631,1)" x="40.84 47.79">40</text>
<text class="a" transform="translate(0,489) scale(0.8631,1)" x="1162.42 1169.37">40</text>
<text class="a" transform="translate(0,473) scale(0.8631,1)" x="40.84 47.79">45</text>
<text class="a" transform="translate(0,473) scale(0.8631,1)" x="1162.42 1169.37">45</text>
<text class="a" transform="translate(0,458) scale(0.8631,1)" x="40.84 47.79">50</text>
<text class="a" transform="translate(0,458) scale(0.8631,1)" x="1162.42 1169.37">50</text>
<text class="a" transform="translate(0,442) scale(0.8631,1)" x="40.84 47.79">55</text>
<text class="a" transform="translate(0,442) scale(0.8631,1)" x="1162.42 1169.37">55</text>
<text class="a" transform="translate(0,625) scale(0.8631,1)" x="47.79 55.90 62.86 69.81">F57h</text>
<text class="a" transform="translate(0,625) scale(0.8631,1)" x="79.08 86.03 92.98 99.93 106.89 115.00">1516Fh</text>
<text class="a" transform="translate(0,625) scale(0.8631,1)" x="130.06 137.01 145.12 152.07 159.02 167.14">2F27Fh</text>
<text class="a" transform="translate(0,625) scale(0.8631,1)" x="183.36 190.31 197.26 204.21 211.16 218.12">49390h</text>
<text class="a" transform="translate(0,625) scale(0.8631,1)" x="230.86 237.81 244.76 252.88 259.83 267.94">62E0Eh</text>
<text class="a" transform="translate(0,625) scale(0.8631,1)" x="283.00 289.95 299.22 306.17 313.13 320.08">7D534h</text>
<text class="a" transform="translate(0,625) scale(0.8631,1)" x="335.14 342.09 349.04 356.00 362.95 369.90">97594h</text>
<text class="a" transform="translate(0,625) scale(0.8631,1)" x="386.12 394.23 401.18 408.13 415.09 422.04">B1678h</text>
<text class="a" transform="translate(0,625) scale(0.8631,1)" x="435.94 445.21 454.48 461.43 468.38 475.34">CC406h</text>
<text class="a" transform="translate(0,625) scale(0.8631,1)" x="489.24 497.35 504.30 511.25 518.21 525.16">E7183h</text>
<text class="a" transform="translate(0,625) scale(0.8631,1)" x="541.38 548.33 555.28 562.24 569.19 576.14 583.09">103201h</text>
<text class="a" transform="translate(0,625) scale(0.8631,1)" x="599.31 606.26 613.22 620.17 627.12 634.07 643.34">12124Dh</text>
<text class="a" transform="translate(0,625) scale(0.8631,1)" x="658.40 665.36 672.31 680.42 687.37 694.32 701.27">13F272h</text>
<text class="a" transform="translate(0,625) scale(0.8631,1)" x="717.49 724.45 731.40 740.67 747.62 754.57 761.52">15D846h</text>
<text class="a" transform="translate(0,625) scale(0.8631,1)" x="778.90 785.85 792.81 802.08 809.03 815.98 822.93">17D171h</text>
<text class="a" transform="translate(0,625) scale(0.8631,1)" x="839.15 846.10 853.06 862.33 869.28 876.23 884.34">19C49Bh</text>
<text class="a" transform="translate(0,625) scale(0.8631,1)" x="901.72 908.67 916.78 926.05 933.00 939.96 946.91">1BC479h</text>
<text class="a" transform="translate(0,625) scale(0.8631,1)" x="965.45 972.40 981.67 990.94 997.89 1004.84 1011.79">1DD189h</text>
<text class="a" transform="translate(0,625) scale(0.8631,1)" x="1028.01 1034.96 1043.08 1052.34 1059.30 1067.41 1074.36">1FD0F5h</text>
<text class="a" transform="translate(0,625) scale(0.8631,1)" x="1091.74 1098.69 1105.64 1114.91 1121.86 1128.82 1135.77">21D168h</text>
<text class="h" transform="translate(0,422) scale(0.92,1)" x="563.15 571.09">PO</text>
</g>
</svg>
</body></html>
